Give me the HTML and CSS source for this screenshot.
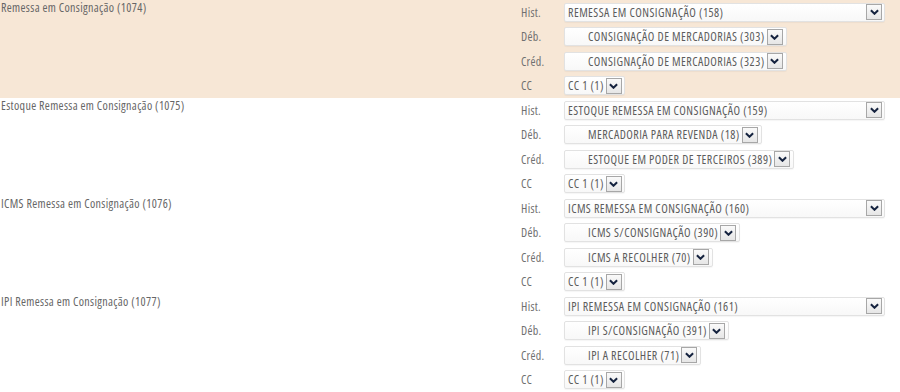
FILE: index.html
```html
<!DOCTYPE html>
<html lang="pt-BR">
<head>
  <meta charset="UTF-8" />
  <title>Contabilização - Consignação</title>
  <link rel="stylesheet" href="styles.css">
</head>
<body>
  <!-- Remessa em Consignação -->
  <div class="group active">
    <div class="group-title">Remessa em Consignação (1074)</div>
    <div class="fields">
      <span class="field-label">Hist.</span>
      <div class="select wide"><span class="value">REMESSA EM CONSIGNAÇÃO (158)</span><span class="arrow"><svg viewBox="0 0 10 6"><path d="M1 1l4 4 4-4"/></svg></span></div>
      <span class="field-label">Déb.</span>
      <div class="select account"><span class="value">CONSIGNAÇÃO DE MERCADORIAS (303)</span><span class="arrow"><svg viewBox="0 0 10 6"><path d="M1 1l4 4 4-4"/></svg></span></div>
      <span class="field-label">Créd.</span>
      <div class="select account"><span class="value">CONSIGNAÇÃO DE MERCADORIAS (323)</span><span class="arrow"><svg viewBox="0 0 10 6"><path d="M1 1l4 4 4-4"/></svg></span></div>
      <span class="field-label">CC</span>
      <div class="select"><span class="value">CC 1 (1)</span><span class="arrow"><svg viewBox="0 0 10 6"><path d="M1 1l4 4 4-4"/></svg></span></div>
    </div>
  </div>

  <!-- Estoque Remessa em Consignação -->
  <div class="group">
    <div class="group-title">Estoque Remessa em Consignação (1075)</div>
    <div class="fields">
      <span class="field-label">Hist.</span>
      <div class="select wide"><span class="value">ESTOQUE REMESSA EM CONSIGNAÇÃO (159)</span><span class="arrow"><svg viewBox="0 0 10 6"><path d="M1 1l4 4 4-4"/></svg></span></div>
      <span class="field-label">Déb.</span>
      <div class="select account"><span class="value">MERCADORIA PARA REVENDA (18)</span><span class="arrow"><svg viewBox="0 0 10 6"><path d="M1 1l4 4 4-4"/></svg></span></div>
      <span class="field-label">Créd.</span>
      <div class="select account"><span class="value">ESTOQUE EM PODER DE TERCEIROS (389)</span><span class="arrow"><svg viewBox="0 0 10 6"><path d="M1 1l4 4 4-4"/></svg></span></div>
      <span class="field-label">CC</span>
      <div class="select"><span class="value">CC 1 (1)</span><span class="arrow"><svg viewBox="0 0 10 6"><path d="M1 1l4 4 4-4"/></svg></span></div>
    </div>
  </div>

  <!-- ICMS Remessa em Consignação -->
  <div class="group">
    <div class="group-title">ICMS Remessa em Consignação (1076)</div>
    <div class="fields">
      <span class="field-label">Hist.</span>
      <div class="select wide"><span class="value">ICMS REMESSA EM CONSIGNAÇÃO (160)</span><span class="arrow"><svg viewBox="0 0 10 6"><path d="M1 1l4 4 4-4"/></svg></span></div>
      <span class="field-label">Déb.</span>
      <div class="select account"><span class="value">ICMS S/CONSIGNAÇÃO (390)</span><span class="arrow"><svg viewBox="0 0 10 6"><path d="M1 1l4 4 4-4"/></svg></span></div>
      <span class="field-label">Créd.</span>
      <div class="select account"><span class="value">ICMS A RECOLHER (70)</span><span class="arrow"><svg viewBox="0 0 10 6"><path d="M1 1l4 4 4-4"/></svg></span></div>
      <span class="field-label">CC</span>
      <div class="select"><span class="value">CC 1 (1)</span><span class="arrow"><svg viewBox="0 0 10 6"><path d="M1 1l4 4 4-4"/></svg></span></div>
    </div>
  </div>

  <!-- IPI Remessa em Consignação -->
  <div class="group">
    <div class="group-title">IPI Remessa em Consignação (1077)</div>
    <div class="fields">
      <span class="field-label">Hist.</span>
      <div class="select wide"><span class="value">IPI REMESSA EM CONSIGNAÇÃO (161)</span><span class="arrow"><svg viewBox="0 0 10 6"><path d="M1 1l4 4 4-4"/></svg></span></div>
      <span class="field-label">Déb.</span>
      <div class="select account"><span class="value">IPI S/CONSIGNAÇÃO (391)</span><span class="arrow"><svg viewBox="0 0 10 6"><path d="M1 1l4 4 4-4"/></svg></span></div>
      <span class="field-label">Créd.</span>
      <div class="select account"><span class="value">IPI A RECOLHER (71)</span><span class="arrow"><svg viewBox="0 0 10 6"><path d="M1 1l4 4 4-4"/></svg></span></div>
      <span class="field-label">CC</span>
      <div class="select"><span class="value">CC 1 (1)</span><span class="arrow"><svg viewBox="0 0 10 6"><path d="M1 1l4 4 4-4"/></svg></span></div>
    </div>
  </div>
</body>
</html>
```

FILE: styles.css
```css
body {
  margin: 0;
  font-family: 'Open Sans', Lato, sans-serif;
  font-stretch: 80%;
  font-size: 12px;
  color: #666;
  background: #fff;
}

/* Each event row */
.group {
  display: flex;
  height: 98px;
}

.group.active {
  background: #f7e7d6;
}

.group-title {
  width: 520px;
  padding-left: 1px;
  line-height: 15px;
  color: #666;
  letter-spacing: 0.35px;
}

.fields {
  display: grid;
  grid-template-columns: 43px auto;
  grid-auto-rows: 24.5px;
  align-items: center;
  justify-items: start;
}

.field-label {
  color: #707070;
  letter-spacing: 0.3px;
}

/* Fake select boxes */
.select {
  display: inline-flex;
  align-items: center;
  height: 19px;
  box-sizing: border-box;
  padding: 0 2px 0 3px;
  background: linear-gradient(#fff, #f8f8f8);
  border: 1px solid #e2e2e2;
  border-radius: 2px;
  box-shadow: 0 1px 1px rgba(0, 0, 0, 0.04);
  color: #5c5c5c;
  white-space: nowrap;
}

.select.wide {
  width: 321px;
  justify-content: space-between;
}

.select.account {
  padding-left: 23px;
  padding-right: 3px;
}

.select .value {
  letter-spacing: 0.45px;
}

.arrow {
  display: inline-flex;
  align-items: center;
  justify-content: center;
  width: 16px;
  height: 16px;
  box-sizing: border-box;
  border: 1px solid #a7a7a7;
  background: linear-gradient(#fafafa, #e6e6e6);
  margin-left: 2px;
}

.select.wide .arrow {
  margin-left: 0;
}

.arrow svg {
  width: 9px;
  height: 6px;
  fill: none;
  stroke: #15233f;
  stroke-width: 2.2;
}
```
